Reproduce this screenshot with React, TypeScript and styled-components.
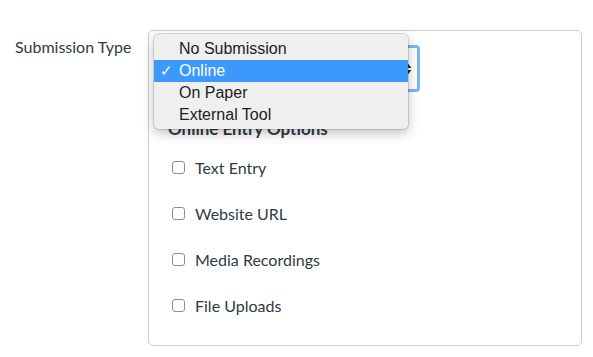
import React from 'react';
import styled, { createGlobalStyle } from 'styled-components';

const GlobalStyle = createGlobalStyle`
  html, body {
    margin: 0;
    padding: 0;
    background: #ffffff;
  }
  body {
    font-family: Lato, "Liberation Sans", sans-serif;
    color: #2d3b45;
  }
`;

const Page = styled.div`
  display: flex;
  align-items: flex-start;
  padding-top: 30px;
  width: 593px;
  height: 357px;
  box-sizing: border-box;
`;

const FieldLabel = styled.div`
  width: 133px;
  padding-left: 15px;
  padding-top: 7px;
  font-size: 16px;
  line-height: 20px;
  color: #2d3b45;
`;

const Panel = styled.div`
  position: relative;
  width: 434px;
  height: 316px;
  box-sizing: border-box;
  border: 1px solid #c7cdd1;
  border-radius: 5px;
  padding: 14px 0 0 17px;
`;

const SelectWrap = styled.div`
  position: relative;
  width: 254px;
  height: 47px;
`;

const FakeSelect = styled.div`
  box-sizing: border-box;
  width: 100%;
  height: 100%;
  border: 3px solid #7db5f4;
  border-radius: 4px;
  background: #fff;
  display: flex;
  align-items: center;
  justify-content: flex-end;
  padding-right: 5px;
`;

const Menu = styled.ul`
  position: absolute;
  left: -12px;
  top: -11px;
  width: 254px;
  margin: 0;
  padding: 4px 0 3px;
  list-style: none;
  background: #efefef;
  border-radius: 5px;
  box-shadow: 0 0 0 1px rgba(0, 0, 0, 0.12), 0 4px 12px rgba(0, 0, 0, 0.25);
  z-index: 2;
`;

const MenuItem = styled.li<{ $active?: boolean }>`
  position: relative;
  height: 22px;
  line-height: 22px;
  padding-left: 25px;
  font-family: "Liberation Sans", Arial, sans-serif;
  font-size: 16px;
  color: ${p => (p.$active ? '#ffffff' : '#222222')};
  background: ${p => (p.$active ? '#3c99fc' : 'transparent')};
`;

const Check = styled.span`
  position: absolute;
  left: 6px;
  top: 0;
  font-size: 15px;
`;

const SectionTitle = styled.h3`
  margin: 27px 0 0 2px;
  font-size: 17px;
  line-height: 20px;
  font-weight: 700;
  color: #2d3b45;
`;

const OptionList = styled.div`
  display: flex;
  flex-direction: column;
  gap: 26px;
  margin-top: 18px;
  padding-left: 6px;
`;

const OptionRow = styled.label`
  display: flex;
  align-items: center;
  gap: 10px;
  height: 20px;
  font-size: 16px;
  color: #2d3b45;
`;

const Box = styled.span`
  width: 11px;
  height: 11px;
  border: 1px solid #8a8f94;
  border-radius: 3px;
  background: #fff;
`;

const options = ['Text Entry', 'Website URL', 'Media Recordings', 'File Uploads'];
const menuItems = ['No Submission', 'Online', 'On Paper', 'External Tool'];

export default function App() {
  return (
    <>
      <GlobalStyle />
      <Page>
        <FieldLabel>Submission Type</FieldLabel>
        <Panel>
          <SelectWrap>
            <FakeSelect>
              <svg width="7" height="12" viewBox="0 0 7 12">
                <path d="M0.5 5 L3.5 1 L6.5 5 Z" fill="#2b2b2b" />
                <path d="M0.5 7 L3.5 11 L6.5 7 Z" fill="#2b2b2b" />
              </svg>
            </FakeSelect>
            <Menu>
              {menuItems.map(item => (
                <MenuItem key={item} $active={item === 'Online'}>
                  {item === 'Online' && <Check>✓</Check>}
                  {item}
                </MenuItem>
              ))}
            </Menu>
          </SelectWrap>
          <SectionTitle>Online Entry Options</SectionTitle>
          <OptionList>
            {options.map(opt => (
              <OptionRow key={opt}>
                <Box />
                {opt}
              </OptionRow>
            ))}
          </OptionList>
        </Panel>
      </Page>
    </>
  );
}
